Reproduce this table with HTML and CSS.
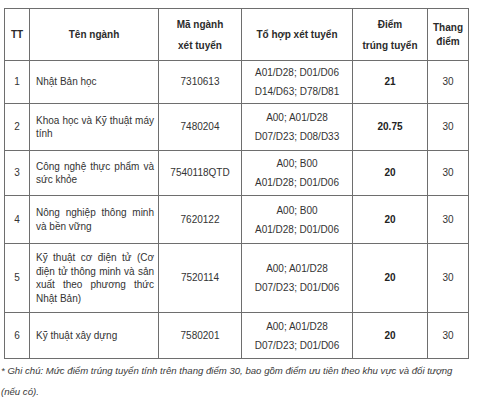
FILE: index.html
```html
<!DOCTYPE html>
<html lang="vi">
<head>
<meta charset="utf-8">
<link rel="stylesheet" href="styles.css">
</head>
<body>
<div class="page">
  <table class="scores">
    <colgroup>
      <col class="c-tt"><col class="c-name"><col class="c-code"><col class="c-combo"><col class="c-score"><col class="c-scale">
    </colgroup>
    <thead>
      <tr class="r-head">
        <th>TT</th>
        <th>Tên ngành</th>
        <th class="two">Mã ngành<br>xét tuyển</th>
        <th>Tổ hợp xét tuyển</th>
        <th class="two">Điểm<br>trúng tuyển</th>
        <th class="wrap">Thang điểm</th>
      </tr>
    </thead>
    <tbody>
      <tr class="r1">
        <td class="ctr">1</td>
        <td class="name">Nhật Bản học</td>
        <td class="ctr">7310613</td>
        <td class="combo">A01/D28; D01/D06<br>D14/D63; D78/D81</td>
        <td class="ctr bold">21</td>
        <td class="ctr">30</td>
      </tr>
      <tr class="r2">
        <td class="ctr">2</td>
        <td class="name">Khoa học và Kỹ thuật máy tính</td>
        <td class="ctr">7480204</td>
        <td class="combo">A00; A01/D28<br>D07/D23; D08/D33</td>
        <td class="ctr bold">20.75</td>
        <td class="ctr">30</td>
      </tr>
      <tr class="r3">
        <td class="ctr">3</td>
        <td class="name">Công nghệ thực phẩm và sức khỏe</td>
        <td class="ctr">7540118QTD</td>
        <td class="combo">A00; B00<br>A01/D28; D01/D06</td>
        <td class="ctr bold">20</td>
        <td class="ctr">30</td>
      </tr>
      <tr class="r4">
        <td class="ctr">4</td>
        <td class="name">Nông nghiệp thông minh và bền vững</td>
        <td class="ctr">7620122</td>
        <td class="combo">A00; B00<br>A01/D28; D01/D06</td>
        <td class="ctr bold">20</td>
        <td class="ctr">30</td>
      </tr>
      <tr class="r5">
        <td class="ctr">5</td>
        <td class="name">Kỹ thuật cơ điện tử (Cơ điện tử thông minh và sản xuất theo phương thức Nhật Bản)</td>
        <td class="ctr">7520114</td>
        <td class="combo">A00; A01/D28<br>D07/D23; D01/D06</td>
        <td class="ctr bold">20</td>
        <td class="ctr">30</td>
      </tr>
      <tr class="r6">
        <td class="ctr">6</td>
        <td class="name">Kỹ thuật xây dựng</td>
        <td class="ctr">7580201</td>
        <td class="combo">A00; A01/D28<br>D07/D23; D01/D06</td>
        <td class="ctr bold">20</td>
        <td class="ctr">30</td>
      </tr>
    </tbody>
  </table>
  <p class="note">* Ghi chú: Mức điểm trúng tuyển tính trên thang điểm 30, bao gồm điểm ưu tiên theo khu vực và đối tượng (nếu có).</p>
</div>
</body>
</html>
```

FILE: styles.css
```css
html, body {
  margin: 0;
  padding: 0;
  background: #ffffff;
}

body {
  font-family: "Liberation Sans", Arial, sans-serif;
  font-size: 10px;
  color: #333333;
}

.page {
  padding: 8px 0 0 0;
}

.scores {
  margin-left: 4px;
  width: 464px;
  border-collapse: collapse;
  table-layout: fixed;
}

.c-tt { width: 25px; }
.c-name { width: 129px; }
.c-code { width: 83px; }
.c-combo { width: 111px; }
.c-score { width: 75px; }
.c-scale { width: 41px; }

.scores th,
.scores td {
  border: 1px solid #6e6e6e;
  padding: 0 5px;
  vertical-align: middle;
  text-align: center;
  line-height: 14px;
}

.scores th {
  font-weight: bold;
  color: #2b2b2b;
}

.scores th.two {
  line-height: 21px;
}

.scores td.name {
  text-align: justify;
  padding: 0 4px 0 6px;
  line-height: 13.5px;
}

.scores td.combo {
  line-height: 19px;
}

.scores td.bold {
  font-weight: bold;
  color: #222222;
}

.r-head { height: 52px; }
.r1 { height: 43px; }
.r2 { height: 47px; }
.r3 { height: 45px; }
.r4 { height: 48px; }
.r5 { height: 69px; }
.r6 { height: 46px; }

.note {
  margin: 1px 0 0 1px;
  font-style: italic;
  font-size: 9.6px;
  line-height: 21px;
  color: #3a3a3a;
  width: 462px;
}
```
